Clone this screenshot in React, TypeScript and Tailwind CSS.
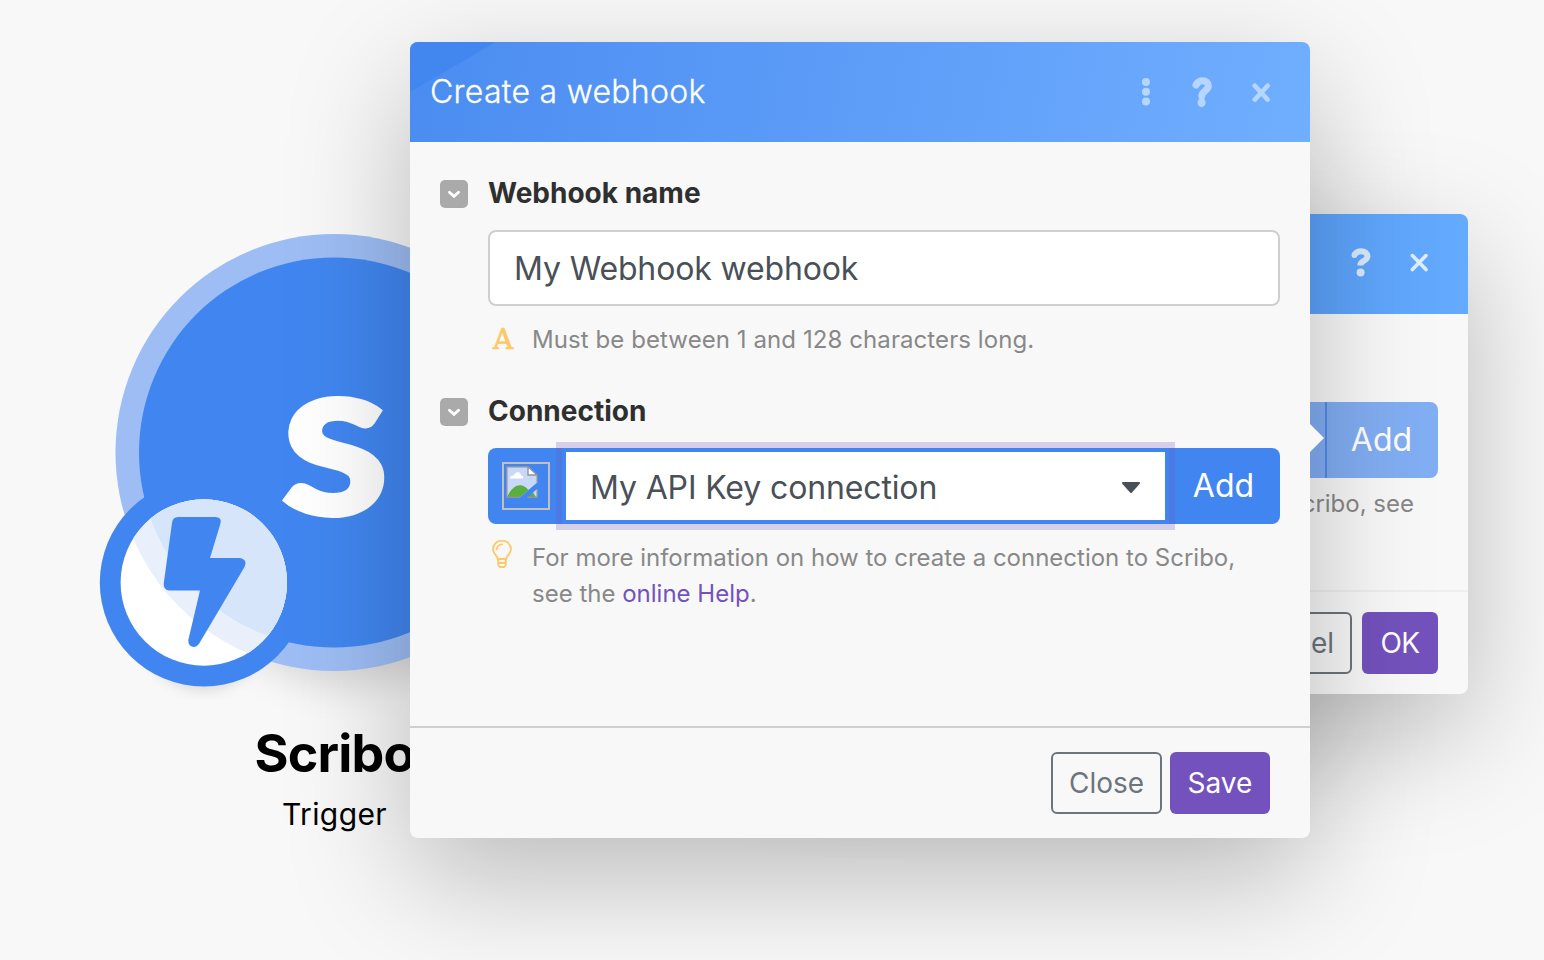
import type { ReactNode } from 'react';

function ChevronBox() {
  return (
    <span className="flex h-7 w-7 shrink-0 items-center justify-center rounded-[5px] bg-[#aaaaaa]">
      <svg width="14" height="9" viewBox="0 0 14 9" fill="none">
        <path d="M2.4 2.2L7 6.4L11.6 2.2" stroke="#fff" strokeWidth="2.8" strokeLinecap="round" />
      </svg>
    </span>
  );
}

function DotsIcon() {
  return (
    <svg width="8" height="28" viewBox="0 0 8 28" fill="currentColor">
      <circle cx="4" cy="4" r="4" />
      <circle cx="4" cy="13.700" r="4" />
      <circle cx="4" cy="23.400" r="4" />
    </svg>
  );
}

function CloseIcon({ bold }: { bold?: boolean }) {
  return (
    <svg width="18" height="20" viewBox="0 0 18 20" fill="none">
      <path
        d={bold ? 'M2.8 2.8L15.6 16.6M15.6 2.8L2.8 16.6' : 'M2.4 2.600L16 16.600M16 2.600L2.4 16.600'}
        stroke="currentColor"
        strokeWidth={bold ? 4.6 : 3.6}
        strokeLinecap="round"
      />
    </svg>
  );
}

function QuestionIcon({ bold }: { bold?: boolean }) {
  return (
    <svg width="20" height="30" viewBox="0 0 20 30" fill="none">
      <path
        d={
          bold
            ? 'M4 8C5.800 4.800 8 3.800 10.700 3.800C14 3.800 16.400 5.800 16.400 8.800C16.400 13.700 9.800 13.700 9.800 19'
            : 'M3.200 7C5 4.200 7.200 3.200 10.200 3.200C13.800 3.200 16.400 5 16.400 8.200C16.400 13.200 9.300 12.400 9.300 17.600'
        }
        stroke="currentColor"
        strokeWidth={bold ? 7 : 6}
        strokeLinecap={bold ? 'round' : 'butt'}
        strokeLinejoin="round"
      />
      {!bold && <circle cx="3.400" cy="7" r="2.900" fill="currentColor" />}
      <ellipse cx="9.600" cy={bold ? 25.600 : 24.400} rx="4" ry={bold ? 4.4 : 4} fill="currentColor" />
    </svg>
  );
}

function BulbIcon() {
  return (
    <svg width="20" height="30" viewBox="0 0 20 30" fill="none" stroke="#fcc969" strokeWidth="1.800">
      <path d="M5.700 19C5.700 15.500 1 14 1 9.300A9 8.700 0 0 1 19 9.300C19 14 14.300 15.500 14.300 19Z" />
      <path d="M4.700 9.300A5.500 5.500 0 0 1 10.200 4.300" strokeLinecap="round" />
      <path d="M6.200 19V25L8 27H12L13.800 25V19M6.200 23H13.800" />
    </svg>
  );
}

function BrokenImage() {
  return (
    <span className="ml-[14px] flex h-12 w-12 shrink-0 items-start border-2 border-[#c0c0c0] pl-[2px] pt-[2px]">
      <svg width="32" height="32" viewBox="0 0 32 32">
        <path d="M.8.8H22L31.200 9V16.500L14 31.200H.8Z" fill="#c7d9f6" />
        <path d="M1 31.200C7 18 16 16 22.500 24L14 31.200Z" fill="#5aad3f" />
        <path d="M4 12.500C4 9 8 9.500 8 9.500C9 5 15 5 15 9.500C18 10 18 12.500 16 12.500Z" fill="#fff" />
        <path d="M21.500 31.200L27 26.500L30 31.200Z" fill="#5aad3f" />
        <path d="M27 26.500L31.200 23V31.200H30Z" fill="#c7d9f6" />
        <path d="M22 .8V9H31.200Z" fill="#fff" />
        <path d="M14 31.200H.8V.8H22L31.200 9V16.500M22 .8V9H31.200M21.500 31.200H31.200V23" fill="none" stroke="#8d949f" strokeWidth="1.400" />
      </svg>
    </span>
  );
}

function Label({ children }: { children: ReactNode }) {
  return (
    <div className="flex items-center gap-5">
      <ChevronBox />
      <h3 className="pb-[2px] text-[28px] font-bold leading-[26px] text-[#2f2f2f]">{children}</h3>
    </div>
  );
}

function TriggerNode() {
  return (
    <div className="absolute left-0 top-0 w-[668px]">
      <svg width="668" height="730" viewBox="0 0 668 730" className="block">
        <defs>
          <filter id="wide" x="-30%" y="-30%" width="160%" height="160%">
            <feGaussianBlur stdDeviation="20" />
          </filter>
          <filter id="small" x="-30%" y="-30%" width="160%" height="160%">
            <feGaussianBlur stdDeviation="7" />
          </filter>
          <clipPath id="disc">
            <circle cx="203.800" cy="582.500" r="83.200" />
          </clipPath>
        </defs>
        <circle cx="350" cy="530" r="155" fill="#000" opacity="0.14" filter="url(#wide)" />
        <circle cx="334" cy="452.500" r="218.500" fill="#9dbdf4" />
        <circle cx="334" cy="452.500" r="195" fill="#4186f0" />
        <ellipse cx="204" cy="630" rx="62" ry="60" fill="#000" opacity="0.13" filter="url(#small)" />
        <circle cx="203.800" cy="582.500" r="104" fill="#4186f0" />
        <g clipPath="url(#disc)">
          <rect x="120" y="498" width="168" height="168" fill="#fff" />
          <circle cx="334" cy="452.500" r="218.500" fill="#e9f0fc" />
          <circle cx="334" cy="452.500" r="195" fill="#d7e5fb" />
        </g>
        <path
          d="M178 517H215Q222.500 517 220.300 524L210 558H239Q248 559 244.500 567L199.500 643Q197 647 193.500 647Q188 646 188.300 640L200 590.500H169Q163 589.500 163.800 583L172 523Q172.500 517 178 517Z"
          fill="#4186f0"
        />
        <text
          transform="translate(335 514) scale(1.2 1)"
          textAnchor="middle"
          fontSize="157"
          fill="#fff"
          stroke="#fff"
          strokeWidth="6"
          className="font-['Lato',sans-serif] font-black"
        >
          S
        </text>
      </svg>
      <div className="flex flex-col items-center pl-px pt-[1px] text-black">
        <span className="text-[52px] font-bold leading-[46px] tracking-[-0.8px]">Scribo</span>
        <span className="pt-[17px] text-[30px] leading-10 tracking-[0.4px]">Trigger</span>
      </div>
    </div>
  );
}

function BackDialog() {
  return (
    <section className="absolute left-[768px] top-[214px] flex h-[480px] w-[700px] flex-col rounded-lg bg-[#f8f8f8] shadow-[0_40px_120px_rgba(0,0,0,0.25)]">
      <header className="flex h-[100px] items-center justify-end rounded-t-lg bg-linear-to-r from-[#4186f0] to-[#64abff] pb-[2px] pr-10 text-[#d9e8fc]">
        <QuestionIcon />
        <span className="ml-[39px] text-[#e0edff]">
          <CloseIcon />
        </span>
      </header>
      <div className="flex flex-1 flex-col items-end pr-[30px] pt-[88px]">
        <div className="flex h-[76px] w-[592px] shrink-0 justify-end overflow-hidden rounded-lg bg-[#82aef3]">
          <div className="flex w-[113px] items-center justify-center border-l-2 border-[#4f8bea] pr-[2px] text-[32px] text-white">Add</div>
        </div>
        <p className="mr-6 pt-2 text-[24px] leading-9 text-[#888888]">Scribo, see</p>
      </div>
      <footer className="flex h-[104px] items-start justify-end gap-[10px] border-t-2 border-[#eeeeee] pr-[30px] pt-5">
        <button className="h-[62px] rounded-md border-2 border-[#6c757d] px-4 text-[28px] text-[#6c757d]">Cancel</button>
        <button className="h-[62px] w-[76px] rounded-md bg-[#7352bd] text-[28px] tracking-[-0.5px] text-white">OK</button>
      </footer>
    </section>
  );
}

function WebhookDialog() {
  return (
    <section className="absolute left-[410px] top-[42px] flex h-[796px] w-[900px] flex-col rounded-lg bg-[#f8f8f8] shadow-[0_40px_120px_rgba(0,0,0,0.25)]">
      <header className="relative flex h-[100px] shrink-0 items-center overflow-hidden rounded-t-lg bg-linear-[100deg] from-[#4b8cf1] to-[#70aeff] pl-5 pr-10 text-[#b7d6ff]">
        <svg className="absolute left-0 top-0" width="88" height="50" viewBox="0 0 88 50">
          <path d="M0 0H86L0 50Z" fill="#4186f0" opacity="0.85" />
        </svg>
        <h2 className="relative flex-1 text-[32px] font-[350] leading-10 tracking-[0.28px] text-white [-webkit-text-stroke:0.3px_#fff]">Create a webhook</h2>
        <DotsIcon />
        <span className="ml-[42px]">
          <QuestionIcon bold />
        </span>
        <span className="ml-[40px] mt-[1px]">
          <CloseIcon bold />
        </span>
      </header>
      <div className="flex-1 pl-[30px] pr-[30px] pt-[38px]">
        <Label>Webhook name</Label>
        <div className="ml-12 mt-[22px] flex h-[76px] items-center rounded-lg border-2 border-[#cfcfcf] bg-white px-6 pt-[2px] text-[32px] tracking-[-0.14px] text-[#495057]">
          My Webhook webhook
        </div>
        <div className="ml-12 flex h-[92px] items-start pt-4">
          <span className="ml-[4px] w-[22px] text-center font-['DejaVu_Serif',serif] text-[28px] leading-9 text-[#fcc969] [-webkit-text-stroke:0.7px_#fcc969]">
            A
          </span>
          <p className="ml-[18px] text-[24px] leading-9 tracking-[0.08px] text-[#888888]">Must be between 1 and 128 characters long.</p>
        </div>
        <Label>Connection</Label>
        <div className="ml-12 mt-[22px] flex h-[76px] items-center rounded-lg bg-[#4186f0]">
          <BrokenImage />
          <div className="ml-4 flex h-[68px] w-[599px] shrink-0 items-center justify-between bg-white pl-6 pr-6 pt-[3px] text-[32px] tracking-[-0.13px] text-[#495057] shadow-[0_0_0_4px_#4186f0,0_0_0_10px_rgba(115,82,189,0.25)]">
            <span>My API Key connection</span>
            <svg width="20" height="12" viewBox="0 0 20 12">
              <path d="M2 1H18L10 10Z" fill="#495057" stroke="#495057" strokeWidth="2" strokeLinejoin="round" />
            </svg>
          </div>
          <span className="flex-1 pb-px pl-[2px] text-center text-[32px] text-white">Add</span>
        </div>
        <div className="ml-12 flex items-start pt-4">
          <span className="ml-[4px]">
            <BulbIcon />
          </span>
          <p className="ml-5 text-[24px] leading-9 text-[#888888]">
            For more information on how to create a connection to Scribo,
            <br />
            see the <a className="text-[#7352bd]">online Help</a>.
          </p>
        </div>
      </div>
      <footer className="flex h-[112px] items-start justify-end gap-2 border-t-2 border-[#cfcfcf] pr-10 pt-6">
        <button className="h-[62px] w-[111px] rounded-md border-2 border-[#6c757d] text-[28px] text-[#6c757d]">Close</button>
        <button className="h-[62px] w-[100px] rounded-md bg-[#7352bd] text-[28px] text-white">Save</button>
      </footer>
      <svg className="absolute left-[900px] top-[382px]" width="14" height="28" viewBox="0 0 14 28">
        <path d="M0 0L14 14L0 28Z" fill="#f8f8f8" />
      </svg>
    </section>
  );
}

export default function App() {
  return (
    <main className="relative h-[960px] w-[1544px] overflow-hidden bg-[#f8f8f8] font-['Inter',sans-serif]">
      <TriggerNode />
      <BackDialog />
      <WebhookDialog />
    </main>
  );
}
